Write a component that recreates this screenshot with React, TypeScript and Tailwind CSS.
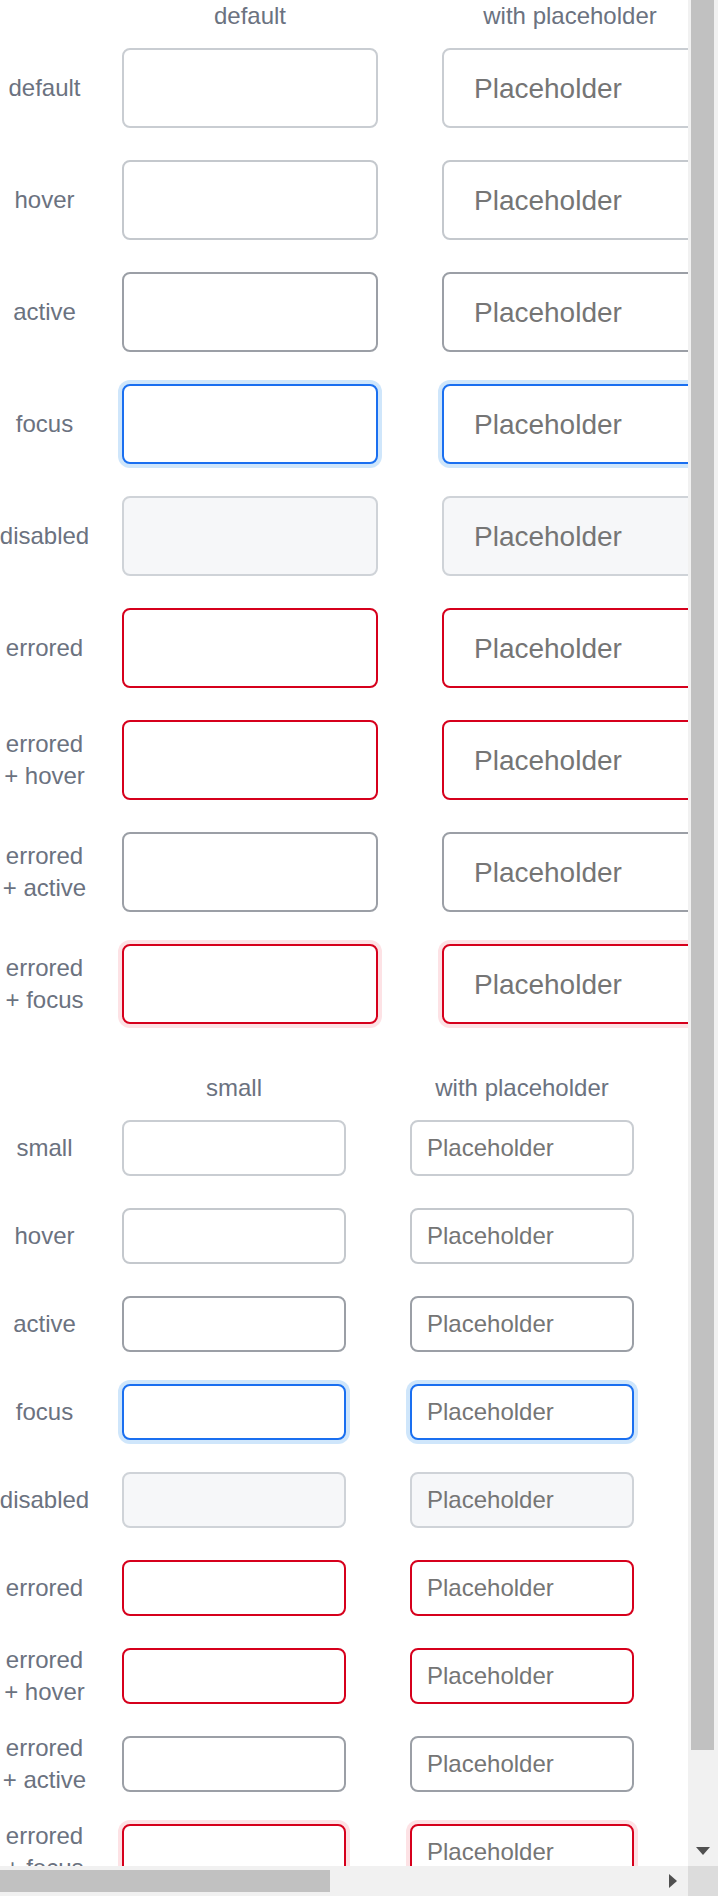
import React from "react";

type State =
  | "default"
  | "hover"
  | "active"
  | "focus"
  | "disabled"
  | "errored"
  | "errHover"
  | "errActive"
  | "errFocus";

const stateClass: Record<State, string> = {
  default: "border-[#c9cdd2] bg-white",
  hover: "border-[#c4c8cd] bg-white",
  active: "border-[#9b9fa6] bg-white",
  focus: "border-[#1a6ff0] bg-white shadow-[0_0_0_4px_#cfe6fb]",
  disabled: "border-[#cfd3d8] bg-[#f6f7f9]",
  errored: "border-[#d6001c] bg-white",
  errHover: "border-[#d6001c] bg-white",
  errActive: "border-[#9b9fa6] bg-white",
  errFocus: "border-[#d6001c] bg-white shadow-[0_0_0_4px_#fde2e5]",
};

type Row = { state: State; label: string[] };

const bigRows: Row[] = [
  { state: "default", label: ["default"] },
  { state: "hover", label: ["hover"] },
  { state: "active", label: ["active"] },
  { state: "focus", label: ["focus"] },
  { state: "disabled", label: ["disabled"] },
  { state: "errored", label: ["errored"] },
  { state: "errHover", label: ["errored", "+ hover"] },
  { state: "errActive", label: ["errored", "+ active"] },
  { state: "errFocus", label: ["errored", "+ focus"] },
];

const smallRows: Row[] = [
  { state: "default", label: ["small"] },
  { state: "hover", label: ["hover"] },
  { state: "active", label: ["active"] },
  { state: "focus", label: ["focus"] },
  { state: "disabled", label: ["disabled"] },
  { state: "errored", label: ["errored"] },
  { state: "errHover", label: ["errored", "+ hover"] },
  { state: "errActive", label: ["errored", "+ active"] },
  { state: "errFocus", label: ["errored", "+ focus"] },
];

function Field({
  state,
  small,
  placeholder,
  second,
}: {
  state: State;
  small: boolean;
  placeholder?: string;
  second?: boolean;
}) {
  const size = small
    ? "h-[56px] w-[224px] px-[15px] text-[24px]"
    : "h-[80px] w-[256px] px-[30px] pt-[2px] text-[28px]";
  const gap = second ? "ml-[64px]" : "ml-[33px]";
  return (
    <div
      className={`${gap} ${size} ${stateClass[state]} flex shrink-0 items-center rounded-[8px] border-2 leading-none text-[#757575]`}
    >
      {placeholder ? <span className="whitespace-nowrap">{placeholder}</span> : null}
    </div>
  );
}

function Section({
  title,
  rows,
  small,
}: {
  title: string;
  rows: Row[];
  small: boolean;
}) {
  const colW = small ? "w-[224px]" : "w-[256px]";
  return (
    <div className="flex w-max flex-col">
      <div className="mb-[16px] flex h-[32px] text-[24px] leading-[32px] text-[#6b7280]">
        <div className="w-[89px] shrink-0" />
        <div className={`ml-[33px] ${colW} shrink-0 text-center`}>{title}</div>
        <div className={`ml-[64px] ${colW} shrink-0 text-center whitespace-nowrap`}>
          with placeholder
        </div>
      </div>
      <div className="flex flex-col gap-[32px]">
        {rows.map((r, i) => (
          <div key={i} className={`flex ${small ? "h-[56px]" : "h-[80px]"} items-center`}>
            <div className="flex w-[89px] shrink-0 flex-col items-center text-center text-[24px] leading-[32px] whitespace-nowrap text-[#6b7280]">
              {r.label.map((l, j) => (
                <span key={j}>{l}</span>
              ))}
            </div>
            <Field state={r.state} small={small} />
            <Field state={r.state} small={small} placeholder="Placeholder" second />
          </div>
        ))}
      </div>
    </div>
  );
}

function VScrollbar() {
  return (
    <div className="flex w-[30px] shrink-0 flex-col bg-[#f1f1f1]">
      <div className="ml-[3px] mr-[4px] h-[1750px] bg-[#c1c1c1]" />
      <div className="flex-1" />
      <div className="flex h-[30px] items-center justify-center">
        <svg width="14" height="8" viewBox="0 0 14 8">
          <polygon points="0,0 14,0 7,8" fill="#505050" />
        </svg>
      </div>
    </div>
  );
}

function HScrollbar() {
  return (
    <div className="flex min-w-0 flex-1 items-center bg-[#f1f1f1]">
      <div className="h-[22px] w-[330px] bg-[#c1c1c1]" />
      <div className="flex-1" />
      <div className="flex h-[30px] w-[30px] items-center justify-center">
        <svg width="8" height="14" viewBox="0 0 8 14">
          <polygon points="0,0 8,7 0,14" fill="#505050" />
        </svg>
      </div>
    </div>
  );
}

export default function App() {
  return (
    <div className="flex h-[1896px] w-[718px] flex-col overflow-hidden bg-white font-['Liberation_Sans',Arial,sans-serif]">
      <div className="flex min-h-0 flex-1">
        <main className="min-w-0 flex-1 overflow-hidden">
          <Section title="default" rows={bigRows} small={false} />
          <div className="mt-[48px]">
            <Section title="small" rows={smallRows} small />
          </div>
        </main>
        <VScrollbar />
      </div>
      <div className="flex h-[30px] shrink-0">
        <HScrollbar />
        <div className="w-[30px] shrink-0 bg-[#dcdcdc]" />
      </div>
    </div>
  );
}
